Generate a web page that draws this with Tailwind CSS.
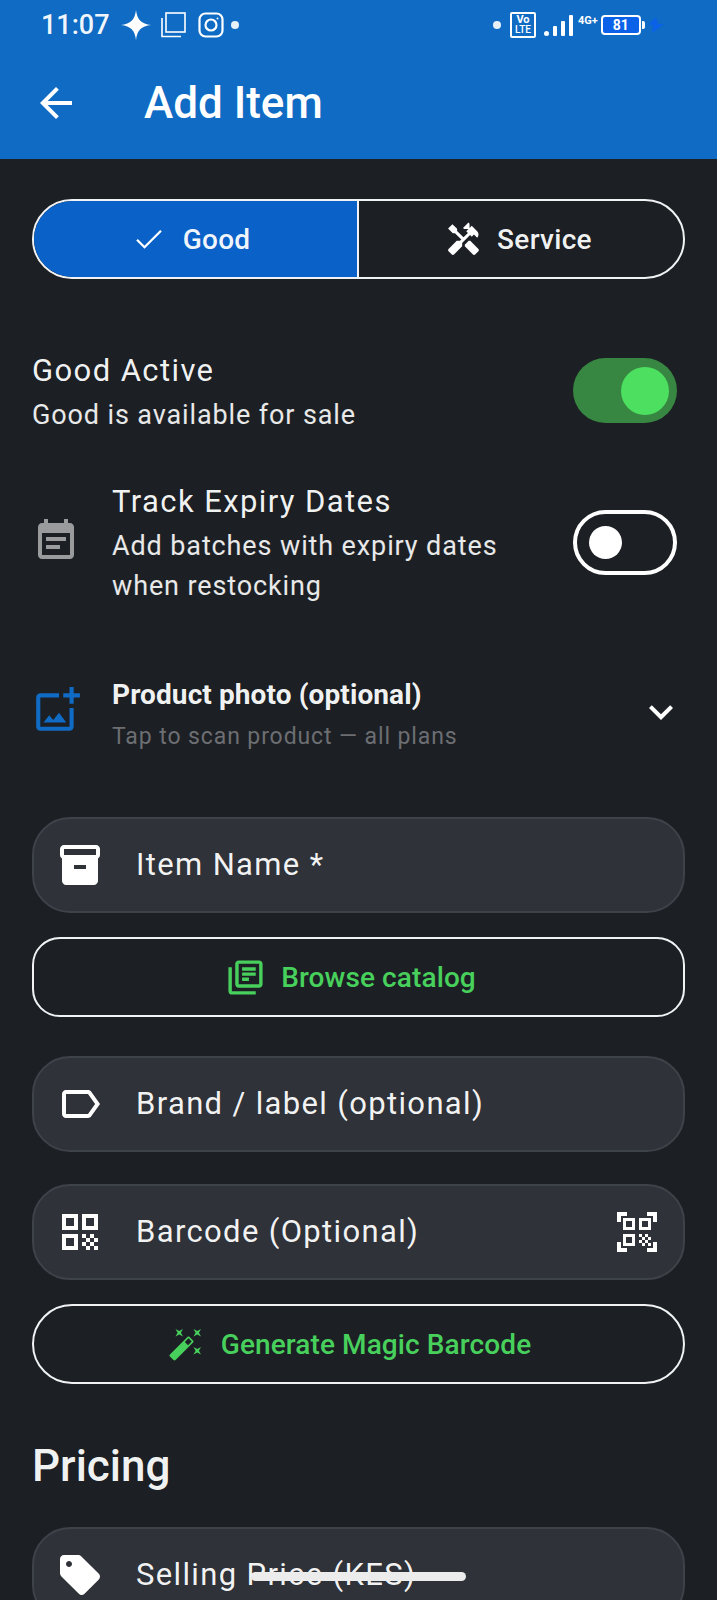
<!DOCTYPE html>
<html lang="en">
<head>
    <meta charset="UTF-8">
    <meta name="viewport" content="width=device-width, initial-scale=1.0">
    <title>Add Item</title>
    <script src="https://cdn.jsdelivr.net/npm/@tailwindcss/browser@4"></script>
</head>
<body class="bg-[#1c1f24] font-['Roboto',sans-serif] text-white">
<div class="relative h-[1600px] w-[717px] overflow-hidden">
    <!-- status bar + app bar -->
    <header class="h-[159px] bg-[#0f6bc3]">
        <div class="flex h-[50px] items-center pl-[41px]">
            <span class="w-[80px] text-[27px] font-medium leading-none text-white/95">11:07</span>
            <svg class="h-[30px] w-[30px]" viewBox="0 0 28 28" fill="#fff"><path d="M14 0C15 9 19 13 28 14C19 15 15 19 14 28C13 19 9 15 0 14C9 13 13 9 14 0Z"/></svg>
            <svg class="ml-[9px] h-[26px] w-[26px]" viewBox="0 0 26 26" fill="none" stroke="#fff" stroke-width="1.6"><rect x="6" y="1" width="19" height="19"/><path d="M2 6V24.500H21"/></svg>
            <svg class="ml-[12px] h-[26px] w-[26px]" viewBox="0 0 26 26" fill="none" stroke="#fff" stroke-width="2.200"><rect x="1.500" y="1.500" width="23" height="23" rx="6"/><circle cx="13" cy="13" r="5.500"/><circle cx="19.500" cy="6.500" r="1" fill="#fff" stroke="none"/></svg>
            <span class="ml-[7px] h-[8px] w-[8px] rounded-full bg-white/90"></span>
            <div class="ml-[254px] flex items-center">
                <span class="h-[8px] w-[8px] rounded-full bg-white/90"></span>
                <div class="ml-[9px] flex h-[26px] w-[26px] flex-col items-center justify-center rounded-[2px] border-2 border-white text-[11px] font-bold leading-[10px]">
                    <span>Vo</span><span class="text-[10px] font-medium">LTE</span>
                </div>
                <div class="ml-[8px] flex h-[22px] items-end gap-[4px]">
                    <span class="h-[5px] w-[5px] rounded-full bg-white"></span>
                    <span class="h-[10px] w-[4px] rounded-[1px] bg-white"></span>
                    <span class="h-[15px] w-[4px] rounded-[1px] bg-white"></span>
                    <span class="h-[21px] w-[4px] rounded-[1px] bg-white"></span>
                </div>
                <span class="mb-[9px] ml-[5px] text-[11px] font-bold leading-none">4G+</span>
                <div class="ml-[3px] flex h-[20px] w-[40px] items-center justify-center rounded-[4px] border-2 border-white bg-[#0b62e8] text-[14px] font-bold leading-none">81</div>
                <span class="ml-[1px] h-[8px] w-[3px] rounded-r-[2px] bg-white"></span>
                <svg class="ml-[3px] h-[16px] w-[16px]" viewBox="0 0 16 16" fill="#0b62e8"><path d="M8 0L0 8H5L4 16L16 7H10Z"/></svg>
            </div>
        </div>
        <div class="mt-[24px] flex items-center pl-[32px]">
            <svg class="h-[48px] w-[48px]" viewBox="0 0 24 24" fill="#fff"><path d="M20 11H7.830l5.590-5.590L12 4l-8 8 8 8 1.410-1.410L7.830 13H20v-2z"/></svg>
            <h1 class="ml-[64px] text-[44px] font-medium leading-[58px]">Add Item</h1>
        </div>
    </header>

    <main class="px-[32px] pt-[40px]">
        <!-- good / service switch -->
        <div class="flex h-[80px] overflow-hidden rounded-full border-2 border-[#f1f2f3]">
            <div class="flex w-[323px] items-center justify-center bg-[#0a62c9] pr-[10px]">
                <svg class="h-[36px] w-[36px]" viewBox="0 0 24 24" fill="none" stroke="#fff" stroke-width="1.500"><path d="M4 12.500L9 17.500L20 6.500"/></svg>
                <span class="ml-[16px] text-[28px] font-medium leading-none tracking-[0.2px] text-white/95 translate-y-[1px]">Good</span>
            </div>
            <div class="flex flex-1 items-center justify-center border-l-2 border-[#f1f2f3] pr-[5px]">
                <svg class="h-[37px] w-[37px]" viewBox="0 0 24 24" fill="#fff"><path d="M21.670 18.170l-5.300-5.300h-.99l-2.540 2.540v.99l5.300 5.300c.39.39 1.020.39 1.410 0l2.120-2.120c.39-.38.39-1.020 0-1.410z"/><path d="M17.340 10.190l1.410-1.410 2.120 2.120c1.170-1.170 1.170-3.070 0-4.240l-3.540-3.540-1.410 1.410V1.710l-.7-.71-3.540 3.540.71.71h2.830l-1.410 1.410 1.060 1.060-2.890 2.890-4.130-4.130V5.060L4.830 2.040 2 4.870 5.030 7.900h1.410l4.130 4.130-.85.85H7.610l-5.300 5.300c-.39.39-.39 1.020 0 1.410l2.120 2.120c.39.39 1.020.39 1.410 0l5.300-5.300v-2.120l5.150-5.150 1.050 1.050z"/></svg>
                <span class="ml-[15px] text-[28px] font-medium leading-none tracking-[0.3px] text-white/95 translate-y-[1px]">Service</span>
            </div>
        </div>

        <!-- good active -->
        <div class="mt-[72px] flex items-center justify-between pr-[8px]">
            <div>
                <p class="text-[31px] leading-[40px] tracking-[1.4px] text-white/95">Good Active</p>
                <p class="mt-[4px] text-[27px] leading-[40px] tracking-[0.88px] text-white/90">Good is available for sale</p>
            </div>
            <div class="mb-[5px] flex h-[65px] w-[104px] items-center justify-end rounded-full bg-[#378641] pr-[8px]">
                <span class="h-[48px] w-[48px] rounded-full bg-[#4de060]"></span>
            </div>
        </div>

        <!-- expiry tracking -->
        <div class="mt-[47px] flex items-center pr-[8px]">
            <svg class="h-[48px] w-[48px] shrink-0 -translate-y-[3px]" viewBox="0 0 24 24" fill="#9a9b9d"><path d="M17 10H7v2h10v-2zm2-7h-1V1h-2v2H8V1H6v2H5c-1.110 0-1.990.9-1.990 2L3 19c0 1.100.89 2 2 2h14c1.100 0 2-.9 2-2V5c0-1.100-.9-2-2-2zm0 16H5V8h14v11zm-5-5H7v2h7v-2z"/></svg>
            <div class="ml-[32px] flex-1">
                <p class="text-[31px] leading-[40px] tracking-[1.4px] text-white/95">Track Expiry Dates</p>
                <p class="mt-[4px] text-[27px] leading-[40px] tracking-[0.88px] text-white/90">Add batches with expiry dates<br>when restocking</p>
            </div>
            <div class="mb-[3px] flex h-[65px] w-[104px] shrink-0 items-center rounded-full border-[4px] border-white pl-[12px]">
                <span class="h-[33px] w-[33px] rounded-full bg-white"></span>
            </div>
        </div>

        <!-- product photo -->
        <div class="mt-[71px] flex items-center">
            <svg class="h-[50px] w-[50px] shrink-0 -translate-y-[6px]" viewBox="0 0 24 24" fill="#0f6bc3"><path d="M18 20H4V6h9V4H4c-1.100 0-2 .9-2 2v14c0 1.100.9 2 2 2h14c1.100 0 2-.9 2-2v-9h-2v9zm-7.790-3.170l-1.960-2.360L5.500 18h11l-3.540-4.710zM20 4V1h-2v3h-3c.01.01 0 2 0 2h3v2.990c.01.01 2 0 2 0V6h3V4h-3z"/></svg>
            <div class="ml-[30px] flex-1">
                <p class="text-[28px] font-bold leading-[36px] tracking-[0.1px] text-white/95">Product photo (optional)</p>
                <p class="mt-[6px] text-[23px] leading-[36px] tracking-[0.9px] text-[#6c6e72]">Tap to scan product — all plans</p>
            </div>
            <svg class="h-[48px] w-[48px] shrink-0 -translate-y-[4px]" viewBox="0 0 24 24" fill="#fff"><path d="M16.590 8.590L12 13.170 7.410 8.590 6 10l6 6 6-6z"/></svg>
        </div>

        <!-- item name -->
        <div class="mt-[62px] flex h-[96px] items-center rounded-[38px] border-2 border-[#3e4249] bg-[#2f3339] pl-[22px]">
            <svg class="h-[48px] w-[48px] shrink-0" viewBox="0 0 24 24" fill="#fff"><path d="M20 2H4c-1 0-2 .9-2 2v3.010c0 .72.43 1.340 1 1.690V20c0 1.100 1.100 2 2 2h14c.9 0 2-.9 2-2V8.700c.57-.35 1-.97 1-1.690V4c0-1.100-1-2-2-2zm-5 12H9v-2h6v2zm5-7H4V4l16-.02V7z"/></svg>
            <span class="ml-[32px] text-[31px] tracking-[1.35px] text-white/95">Item Name *</span>
        </div>

        <!-- browse catalog -->
        <div class="mt-[24px] flex h-[80px] items-center justify-center rounded-[28px] border-2 border-[#f1f2f3] pr-[16px]">
            <svg class="h-[41px] w-[41px]" viewBox="0 0 24 24" fill="#48d05c"><path d="M4 6H2v14c0 1.100.9 2 2 2h14v-2H4V6zm16-4H8c-1.100 0-2 .9-2 2v12c0 1.100.9 2 2 2h12c1.100 0 2-.9 2-2V4c0-1.100-.9-2-2-2zm0 14H8V4h12v12zM10 9h8v2h-8zm0 3h4v2h-4zm0-6h8v2h-8z"/></svg>
            <span class="ml-[15px] text-[28px] font-medium leading-none tracking-[0.1px] text-[#48d05c] translate-y-[1px]">Browse catalog</span>
        </div>

        <!-- brand -->
        <div class="mt-[39px] flex h-[96px] items-center rounded-[38px] border-2 border-[#3e4249] bg-[#2f3339] pl-[22px]">
            <svg class="h-[48px] w-[48px] shrink-0" viewBox="0 0 24 24" fill="#fff"><path d="M17.630 5.840C17.270 5.330 16.670 5 16 5L5 5.010C3.900 5.010 3 5.900 3 7v10c0 1.100.9 1.990 2 1.990L16 19c.67 0 1.270-.33 1.630-.84L22 12l-4.370-6.160zM16 17H5V7h11l3.550 5L16 17z"/></svg>
            <span class="ml-[32px] text-[31px] tracking-[1.35px] text-white/95">Brand / label (optional)</span>
        </div>

        <!-- barcode -->
        <div class="mt-[32px] flex h-[96px] items-center rounded-[38px] border-2 border-[#3e4249] bg-[#2f3339] px-[22px]">
            <svg class="h-[48px] w-[48px] shrink-0" viewBox="0 0 24 24" fill="#fff"><path d="M3 11h8V3H3v8zm2-6h4v4H5V5zM3 21h8v-8H3v8zm2-6h4v4H5v-4zM13 3v8h8V3h-8zm6 6h-4V5h4v4zM19 19h2v2h-2zM13 13h2v2h-2zM15 15h2v2h-2zM13 17h2v2h-2zM15 19h2v2h-2zM17 17h2v2h-2zM17 13h2v2h-2zM19 15h2v2h-2z"/></svg>
            <span class="ml-[32px] flex-1 text-[31px] tracking-[1.35px] text-white/95">Barcode (Optional)</span>
            <svg class="h-[48px] w-[48px] shrink-0" viewBox="0 0 24 24" fill="#fff"><path d="M9.500 6.500v3h-3v-3h3M11 5H5v6h6V5zm-1.500 9.500v3h-3v-3h3M11 13H5v6h6v-6zm6.500-6.500v3h-3v-3h3M19 5h-6v6h6V5zm-6 8h1.500v1.500H13V13zm1.500 1.500H16V16h-1.500v-1.500zM16 13h1.500v1.500H16V13zm-3 3h1.500v1.500H13V16zm1.500 1.500H16V19h-1.500v-1.500zM16 16h1.500v1.500H16V16zm1.500-1.500H19V16h-1.500v-1.500zm0 3H19V19h-1.500v-1.500zM22 7h-2V4h-3V2h5v5zm0 15v-5h-2v3h-3v2h5zM2 22h5v-2H4v-3H2v5zM2 2v5h2V4h3V2H2z"/></svg>
        </div>

        <!-- magic barcode -->
        <div class="mt-[24px] flex h-[80px] items-center justify-center rounded-full border-2 border-[#f1f2f3] pr-[18px]">
            <svg class="h-[36px] w-[36px]" viewBox="0 0 24 24" fill="#48d05c"><path d="M7.500 5.600L10 7 8.600 4.500 10 2 7.500 3.400 5 2l1.400 2.500L5 7zm12 9.800L17 14l1.400 2.500L17 19l2.500-1.400L22 19l-1.400-2.500L22 14zM22 2l-2.500 1.400L17 2l1.400 2.500L17 7l2.500-1.400L22 7l-1.400-2.500zm-7.630 5.290c-.39-.39-1.020-.39-1.410 0L1.290 18.960c-.39.39-.39 1.020 0 1.410l2.340 2.340c.39.39 1.020.39 1.410 0L16.700 11.050c.39-.39.39-1.020 0-1.410l-2.330-2.350zm-1.030 5.490l-2.120-2.120 2.440-2.440 2.120 2.120-2.440 2.440z"/></svg>
            <span class="ml-[17px] text-[28px] font-medium leading-none tracking-[0.1px] text-[#48d05c] translate-y-[1px]">Generate Magic Barcode</span>
        </div>

        <!-- pricing -->
        <h2 class="mt-[57px] text-[44px] font-medium leading-[50px] text-white/95">Pricing</h2>

        <div class="mt-[36px] flex h-[96px] items-center rounded-[38px] border-2 border-[#3e4249] bg-[#2f3339] pl-[22px]">
            <svg class="h-[48px] w-[48px] shrink-0" viewBox="0 0 24 24" fill="#fff"><path d="M21.410 11.410l-8.830-8.830C12.210 2.210 11.700 2 11.170 2H4c-1.100 0-2 .9-2 2v7.170c0 .53.21 1.040.59 1.410l8.830 8.830c.78.78 2.050.78 2.830 0l7.170-7.170c.78-.78.78-2.040-.01-2.830zM6.500 8C5.670 8 5 7.330 5 6.500S5.670 5 6.500 5 8 5.670 8 6.500 7.330 8 6.500 8z"/></svg>
            <span class="ml-[32px] text-[31px] tracking-[1.35px] text-white/95">Selling Price (KES)</span>
        </div>
    </main>

    <!-- gesture bar -->
    <div class="absolute bottom-[19px] left-[251px] h-[9px] w-[215px] rounded-full bg-[#ececec]"></div>
</div>
</body>
</html>
